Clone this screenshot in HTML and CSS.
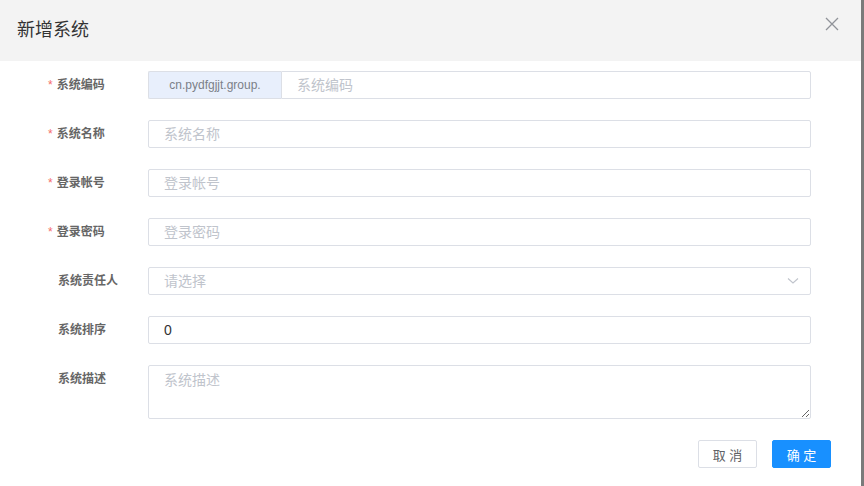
FILE: index.html
```html
<!DOCTYPE html>
<html lang="zh-CN">
<head>
    <meta charset="UTF-8">
    <title>新增系统</title>
    <link rel="stylesheet" href="styles.css">
</head>
<body>
    <div class="dialog">
        <div class="dialog-header">
            <span class="dialog-title">新增系统</span>
            <button class="close-btn" type="button" aria-label="关闭">
                <svg width="14" height="14" viewBox="0 0 14 14">
                    <path d="M1 1 L13 13 M13 1 L1 13" stroke="#909399" stroke-width="1.3" fill="none"/>
                </svg>
            </button>
        </div>

        <form class="dialog-body">
            <div class="form-item">
                <label class="form-label required">系统编码</label>
                <div class="input-group">
                    <span class="input-prepend">cn.pydfgjjt.group.</span>
                    <input class="input" type="text" placeholder="系统编码">
                </div>
            </div>
            <div class="form-item">
                <label class="form-label required">系统名称</label>
                <input class="input" type="text" placeholder="系统名称">
            </div>
            <div class="form-item">
                <label class="form-label required">登录帐号</label>
                <input class="input" type="text" placeholder="登录帐号">
            </div>
            <div class="form-item">
                <label class="form-label required">登录密码</label>
                <input class="input" type="text" placeholder="登录密码">
            </div>
            <div class="form-item">
                <label class="form-label">系统责任人</label>
                <div class="select">
                    <input class="input" type="text" placeholder="请选择" readonly>
                    <svg class="select-arrow" width="12" height="8" viewBox="0 0 12 8">
                        <path d="M1 1.5 L6 6 L11 1.5" stroke="#c0c4cc" stroke-width="1.1" fill="none"/>
                    </svg>
                </div>
            </div>
            <div class="form-item">
                <label class="form-label">系统排序</label>
                <input class="input" type="text" value="0">
            </div>
            <div class="form-item">
                <label class="form-label">系统描述</label>
                <textarea class="textarea" placeholder="系统描述"></textarea>
            </div>
        </form>

        <div class="dialog-footer">
            <button class="btn" type="button">取 消</button>
            <button class="btn btn-primary" type="button">确 定</button>
        </div>
    </div>
    <div class="backdrop"></div>
</body>
</html>
```

FILE: styles.css
```css
* {
    box-sizing: border-box;
}

body {
    margin: 0;
    height: 486px;
    display: flex;
    background-color: #7a7a7a;
    font-family: "Liberation Sans", "Noto Sans CJK SC", sans-serif;
    overflow: hidden;
}

.dialog {
    width: 861px;
    height: 486px;
    background-color: #fff;
}

.backdrop {
    flex: 1;
}

.dialog-header {
    height: 61px;
    background-color: #f3f3f3;
    display: flex;
    align-items: center;
    justify-content: space-between;
    padding: 0 22px 0 17px;
}

.dialog-title {
    font-size: 18px;
    color: #333;
    margin-top: -6px;
}

.close-btn {
    border: 0;
    background: none;
    padding: 0;
    margin-top: -13px;
    width: 14px;
    height: 14px;
    display: flex;
}

.dialog-body {
    padding: 10px 50px 0 48px;
    margin: 0;
}

.form-item {
    display: flex;
    margin-bottom: 21px;
}

.form-label {
    width: 100px;
    height: 28px;
    flex-shrink: 0;
    padding-left: 10px;
    line-height: 28px;
    font-size: 12px;
    font-weight: bold;
    color: #666;
}

.form-label.required::before {
    content: "*";
    color: #f56c6c;
    font-weight: normal;
    margin-left: -10px;
    margin-right: 4px;
}

.input,
.textarea {
    flex: 1;
    width: 100%;
    height: 28px;
    border: 1px solid #dcdfe6;
    border-radius: 2px;
    padding: 0 15px;
    font-size: 14px;
    font-family: "Liberation Sans", "Noto Sans CJK SC", sans-serif;
    color: #333;
    background-color: #fff;
    outline: none;
}

.input::placeholder,
.textarea::placeholder {
    color: #c0c4cc;
}

.input-group {
    flex: 1;
    height: 28px;
    display: flex;
}

.input-group .input {
    border-top-left-radius: 0;
    border-bottom-left-radius: 0;
}

.input-prepend {
    width: 133px;
    height: 28px;
    flex-shrink: 0;
    background-color: #e8effc;
    border: 1px solid #dcdfe6;
    border-right: 0;
    border-radius: 2px 0 0 2px;
    line-height: 26px;
    text-align: center;
    font-size: 12px;
    color: #7b7f88;
}

.select {
    flex: 1;
    display: flex;
    position: relative;
}

.select-arrow {
    position: absolute;
    right: 12px;
    top: 10px;
}

.textarea {
    height: 54px;
    padding: 4px 15px;
    line-height: 21px;
    resize: vertical;
}

.dialog-footer {
    display: flex;
    justify-content: flex-end;
    gap: 15px;
    padding: 0 30px;
}

.btn {
    width: 59px;
    height: 28px;
    border: 1px solid #dcdfe6;
    border-radius: 2px;
    background-color: #fff;
    color: #606266;
    font-size: 13px;
    font-family: "Liberation Sans", "Noto Sans CJK SC", sans-serif;
    padding: 0;
}

.btn-primary {
    background-color: #1890ff;
    border-color: #1890ff;
    color: #fff;
}
```
